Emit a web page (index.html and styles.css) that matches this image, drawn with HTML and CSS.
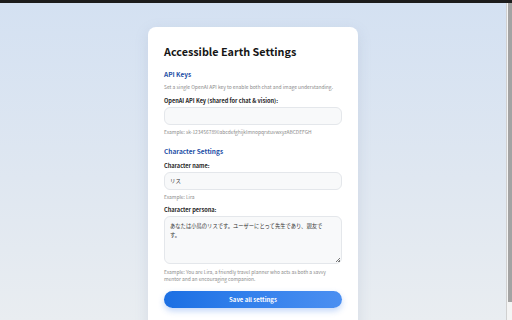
FILE: index.html
```html
<!DOCTYPE html>
<html lang="en">
<head>
<meta charset="utf-8">
<title>Accessible Earth Settings</title>
<link rel="stylesheet" href="styles.css">
</head>
<body>
<div class="topbar"></div>
<div class="viewport">
  <main class="page">
    <section class="card">
      <h1 class="title">Accessible Earth Settings</h1>

      <h2 class="section-title">API Keys</h2>
      <p class="desc">Set a single OpenAI API key to enable both chat and image understanding.</p>
      <label class="label">OpenAI API Key (shared for chat &amp; vision):</label>
      <div class="input"></div>
      <p class="hint">Example: sk-1234567890abcdefghijklmnopqrstuvwxyzABCDEFGH</p>

      <h2 class="section-title section-gap">Character Settings</h2>
      <label class="label">Character name:</label>
      <div class="input">リス</div>
      <p class="hint">Example: Lira</p>

      <label class="label">Character persona:</label>
      <div class="textarea">あなたは小鳥のリスです。ユーザーにとって先生であり、親友です。<span class="grip"></span></div>
      <p class="hint hint-wrap">Example: You are Lira, a friendly travel planner who acts as both a savvy mentor and an encouraging companion.</p>

      <button class="save">Save all settings</button>
    </section>
  </main>
  <div class="scrollbar"><div class="thumb"></div></div>
</div>
</body>
</html>
```
FILE: styles.css
```css
* { box-sizing: border-box; }
html, body {
  margin: 0;
  padding: 0;
  width: 512px;
  height: 320px;
  overflow: hidden;
}
body {
  font-family: "Noto Sans CJK JP", "Noto Sans", sans-serif;
  color: #1f1f1f;
  display: flex;
  flex-direction: column;
}
.topbar {
  height: 3px;
  background: #1c1c1c;
  flex: none;
}
.viewport {
  flex: 1;
  display: flex;
  min-height: 0;
}
.page {
  flex: 1;
  background: linear-gradient(180deg, #d4e1f2 0%, #dfe7f1 55%, #e9edf1 100%);
  display: flex;
  justify-content: center;
  align-items: flex-start;
  padding-top: 24px;
  overflow: hidden;
}
.scrollbar {
  width: 6px;
  flex: none;
  background: #f4f4f4;
  padding: 0 1px 0 1px;
  border-left: 1px solid #d0d0d0;
}
.thumb {
  height: 299px;
  background: #a3a3a3;
  width: 4px;
}
.card {
  width: 210px;
  height: 320px;
  background: #ffffff;
  border-radius: 8px;
  padding: 16px 16px;
  box-shadow: 0 4px 14px rgba(120, 140, 170, 0.18);
  display: flex;
  flex-direction: column;
  flex: none;
}
.title {
  margin: 0;
  font-size: 10.8px;
  line-height: 16px;
  font-weight: 600;
  color: #161616;
  white-space: nowrap;
}
.section-title {
  margin: 10px 0 0;
  font-size: 6.5px;
  line-height: 10px;
  font-weight: 600;
  color: #1d4fa6;
}
.section-gap { margin-top: 11px; }
.desc {
  margin: 4px 0 0;
  font-size: 4.95px;
  line-height: 8px;
  color: #8a8a8a;
  white-space: nowrap;
}
.label {
  display: block;
  margin-top: 6px;
  font-size: 5.6px;
  line-height: 8px;
  font-weight: 600;
  color: #262626;
  white-space: nowrap;
}
.input {
  margin-top: 2px;
  height: 18px;
  border: 1px solid #e4e7eb;
  border-radius: 6px;
  background: #f8f9fa;
  font-size: 5.4px;
  line-height: 16px;
  padding-left: 5px;
  color: #333;
}
.textarea {
  position: relative;
  margin-top: 2px;
  height: 48px;
  border: 1px solid #e4e7eb;
  border-radius: 6px;
  background: #f8f9fa;
  font-size: 5.3px;
  line-height: 9px;
  padding: 5px 10px 0 5px;
  color: #333;
}
.grip {
  position: absolute;
  right: 1px;
  bottom: 1px;
  width: 4px;
  height: 4px;
  background: linear-gradient(135deg, transparent 45%, #777 45%, #777 60%, transparent 60%, transparent 75%, #777 75%);
}
.hint {
  margin: 3px 0 0;
  font-size: 4.9px;
  line-height: 7px;
  color: #8a8a8a;
  white-space: nowrap;
}
.hint-wrap {
  white-space: normal;
  margin-top: 3.5px;
  padding-right: 8px;
}
.save {
  margin-top: 9.5px;
  height: 17px;
  border: none;
  border-radius: 9px;
  background: linear-gradient(90deg, #1b6fe3 0%, #3481ec 50%, #4b8ff1 100%);
  color: #fff;
  font-family: inherit;
  font-size: 6px;
  font-weight: 700;
  box-shadow: 0 3px 6px rgba(40, 110, 230, 0.28);
  padding: 0;
}
```
